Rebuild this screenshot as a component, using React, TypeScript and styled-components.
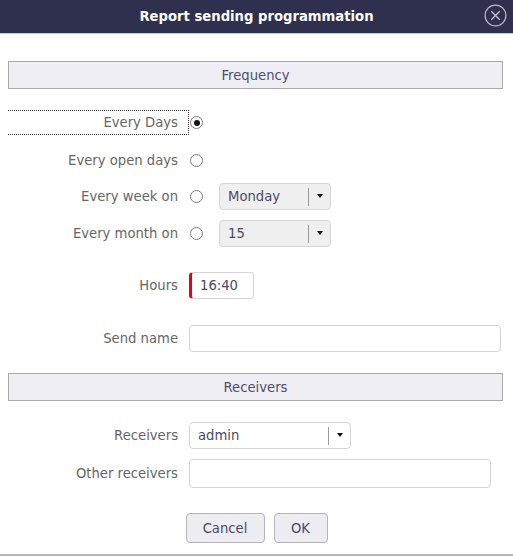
import styled, { createGlobalStyle } from "styled-components"

const Global = createGlobalStyle`
  html, body {
    margin: 0;
    padding: 0;
    background: #fff;
  }
  body {
    font-family: "DejaVu Sans", Verdana, sans-serif;
    font-size: 13.2px;
  }
`

const Dialog = styled.div`
  width: 513px;
  height: 556px;
  box-sizing: border-box;
  border-bottom: 2px solid #b8b8b8;
  display: flex;
  flex-direction: column;
`

const TitleBar = styled.div`
  height: 33px;
  background: #2f2f4e;
  border-bottom: 1px solid #c8c8d0;
  display: flex;
  align-items: center;
  justify-content: center;
  position: relative;
`

const Title = styled.h1`
  margin: 0;
  color: #fff;
  font-size: 13.2px;
  font-weight: bold;
`

const CloseButton = styled.button`
  position: absolute;
  right: 6px;
  top: 4px;
  width: 23px;
  height: 23px;
  padding: 0;
  border: 0;
  background: none;
  cursor: pointer;
  display: flex;
`

const Body = styled.div`
  padding: 27px 10px 0 8px;
  display: flex;
  flex-direction: column;
`

const SectionBar = styled.div<{ $space?: number }>`
  margin-top: ${(p) => p.$space ?? 0}px;
  height: 28px;
  box-sizing: border-box;
  border: 1px solid #a8a8a8;
  background: #efeef4;
  color: #4e4e70;
  display: flex;
  align-items: center;
  justify-content: center;
`

const Row = styled.div<{ $space: number }>`
  margin-top: ${(p) => p.$space}px;
  min-height: 27px;
  display: grid;
  grid-template-columns: 181px 1fr;
  align-items: center;
`

const Label = styled.label<{ $focused?: boolean }>`
  height: 25px;
  box-sizing: border-box;
  padding-right: 10px;
  display: flex;
  align-items: center;
  justify-content: flex-end;
  color: #666;
  border: 1px dotted ${(p) => (p.$focused ? "#333" : "transparent")};
  border-left: 0;
`

const Controls = styled.div`
  display: flex;
  align-items: center;
  gap: 16px;
`

const Radio = styled.span<{ $checked?: boolean }>`
  width: 13px;
  height: 13px;
  margin-left: 1px;
  box-sizing: border-box;
  border-radius: 50%;
  border: 1px solid #7c7c7c;
  background: #fff;
  display: flex;
  align-items: center;
  justify-content: center;

  &::after {
    content: "";
    width: 6px;
    height: 6px;
    border-radius: 50%;
    background: ${(p) => (p.$checked ? "#111" : "transparent")};
  }
`

const Select = styled.div<{ $width: number; $grey?: boolean }>`
  width: ${(p) => p.$width}px;
  height: 27px;
  box-sizing: border-box;
  border: 1px solid #d6d6d6;
  border-radius: 4px;
  background: ${(p) => (p.$grey ? "#efefef" : "#fff")};
  color: #4a4a6a;
  display: flex;
  align-items: center;
  padding-left: 8px;
`

const SelectValue = styled.span`
  flex: 1;
`

const SelectArrow = styled.span`
  width: 21px;
  height: 18px;
  border-left: 1px solid #9a9a9a;
  display: flex;
  align-items: center;
  justify-content: center;

  &::after {
    content: "";
    border-left: 3.5px solid transparent;
    border-right: 3.5px solid transparent;
    border-top: 4px solid #111;
    margin-top: -2px;
  }
`

const Input = styled.input<{ $width: number; $height?: number; $invalid?: boolean }>`
  width: ${(p) => p.$width}px;
  height: ${(p) => p.$height ?? 27}px;
  box-sizing: border-box;
  margin: 0;
  border: 1px solid #d4d4d4;
  border-left: ${(p) => (p.$invalid ? "3px solid #e8000b" : "1px solid #d4d4d4")};
  border-radius: 4px;
  padding: 0 ${(p) => (p.$invalid ? 8 : 10)}px;
  font: inherit;
  color: #4a4a6a;
  background: #fff;
  outline: none;
`

const Buttons = styled.div`
  margin-top: 25px;
  display: flex;
  justify-content: center;
  gap: 9px;
  padding-left: 2px;
`

const Button = styled.button<{ $width: number }>`
  width: ${(p) => p.$width}px;
  height: 30px;
  margin: 0;
  border: 1px solid #b4b4bc;
  border-radius: 4px;
  background: #ececf1;
  color: #4a4a6a;
  font: inherit;
  cursor: pointer;
`

function CloseIcon() {
  return (
    <svg width="23" height="23" viewBox="0 0 23 23">
      <circle cx="11.5" cy="11.5" r="10.4" fill="none" stroke="#b9b9c4" strokeWidth="1.2" />
      <path d="M7.3 7.3 L15.7 15.7 M15.7 7.3 L7.3 15.7" stroke="#c4c4cc" strokeWidth="1.3" />
    </svg>
  )
}

export default function App() {
  return (
    <>
      <Global />
      <Dialog>
        <TitleBar>
          <Title>Report sending programmation</Title>
          <CloseButton aria-label="Close">
            <CloseIcon />
          </CloseButton>
        </TitleBar>
        <Body>
          <SectionBar>Frequency</SectionBar>

          <Row $space={20}>
            <Label $focused>Every Days</Label>
            <Controls>
              <Radio $checked />
            </Controls>
          </Row>
          <Row $space={11}>
            <Label>Every open days</Label>
            <Controls>
              <Radio />
            </Controls>
          </Row>
          <Row $space={9}>
            <Label>Every week on</Label>
            <Controls>
              <Radio />
              <Select $width={112} $grey>
                <SelectValue>Monday</SelectValue>
                <SelectArrow />
              </Select>
            </Controls>
          </Row>
          <Row $space={10}>
            <Label>Every month on</Label>
            <Controls>
              <Radio />
              <Select $width={112} $grey>
                <SelectValue>15</SelectValue>
                <SelectArrow />
              </Select>
            </Controls>
          </Row>

          <Row $space={25}>
            <Label>Hours</Label>
            <Controls>
              <Input $width={65} $invalid defaultValue="16:40" />
            </Controls>
          </Row>
          <Row $space={26}>
            <Label>Send name</Label>
            <Controls>
              <Input $width={312} />
            </Controls>
          </Row>

          <SectionBar $space={21}>Receivers</SectionBar>

          <Row $space={21}>
            <Label>Receivers</Label>
            <Controls>
              <Select $width={162}>
                <SelectValue>admin</SelectValue>
                <SelectArrow />
              </Select>
            </Controls>
          </Row>
          <Row $space={10}>
            <Label>Other receivers</Label>
            <Controls>
              <Input $width={302} $height={29} />
            </Controls>
          </Row>

          <Buttons>
            <Button $width={79}>Cancel</Button>
            <Button $width={54}>OK</Button>
          </Buttons>
        </Body>
      </Dialog>
    </>
  )
}
